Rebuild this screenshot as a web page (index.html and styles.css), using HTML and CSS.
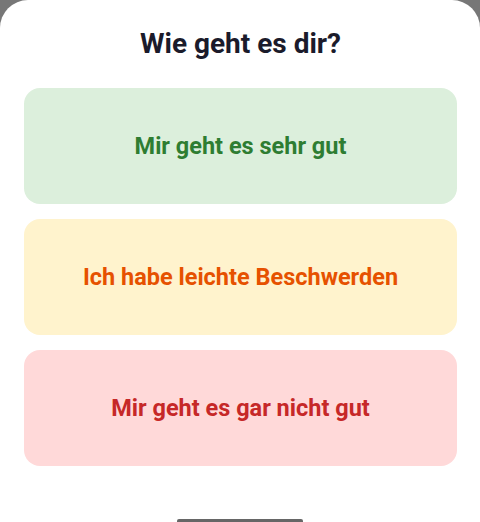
FILE: index.html
```html
<!DOCTYPE html>
<html lang="de">
<head>
<meta charset="utf-8">
<link rel="stylesheet" href="styles.css">
</head>
<body>
<div class="sheet">
  <h1 class="title">Wie geht es dir?</h1>
  <div class="options">
    <button class="option good">Mir geht es sehr gut</button>
    <button class="option medium">Ich habe leichte Beschwerden</button>
    <button class="option bad">Mir geht es gar nicht gut</button>
  </div>
  <div class="home-indicator"></div>
</div>
</body>
</html>
```
FILE: styles.css
```css
html, body {
  margin: 0;
  padding: 0;
  width: 480px;
  height: 522px;
  background: #777777;
  overflow: hidden;
}
.sheet {
  position: relative;
  box-sizing: border-box;
  width: 480px;
  height: 522px;
  background: #ffffff;
  border-radius: 28px 28px 0 0;
  padding: 24px 23px 0 24px;
  font-family: Roboto, "Noto Sans", sans-serif;
}
.title {
  margin: 0 0 26px 0;
  height: 38px;
  line-height: 40px;
  text-align: center;
  font-size: 28px;
  font-weight: 700;
  color: #1b1b2b;
}
.options {
  display: flex;
  flex-direction: column;
  gap: 15px;
}
.option {
  display: flex;
  align-items: center;
  justify-content: center;
  height: 116px;
  border: none;
  border-radius: 16px;
  font-family: Roboto, "Noto Sans", sans-serif;
  font-size: 23.5px;
  font-weight: 700;
  padding: 0;
}
.good { background: #dcefdc; color: #2e7d32; }
.medium { background: #fff3cd; color: #e65100; }
.bad { background: #ffd9d9; color: #c62828; }
.home-indicator {
  position: absolute;
  left: 177px;
  bottom: 0;
  width: 126px;
  height: 3px;
  border-radius: 2px 2px 0 0;
  background: #666666;
}
```
